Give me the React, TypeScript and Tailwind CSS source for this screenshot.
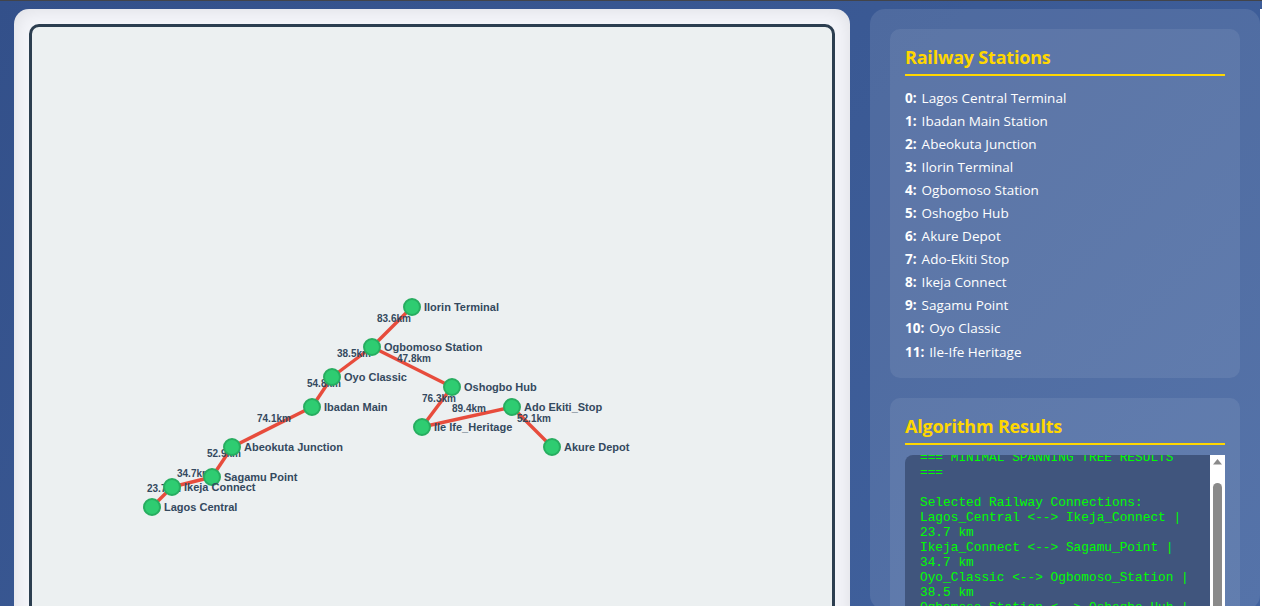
import React from "react";

const OX = 32;
const OY = 27;

const nodes: [string, number, number][] = [
  ["Lagos Central", 152, 507],
  ["Ikeja Connect", 172, 487],
  ["Sagamu Point", 212, 477],
  ["Abeokuta Junction", 232, 447],
  ["Ibadan Main", 312, 407],
  ["Oyo Classic", 332, 377],
  ["Ogbomoso Station", 372, 347],
  ["Ilorin Terminal", 412, 307],
  ["Oshogbo Hub", 452, 387],
  ["Ile Ife_Heritage", 422, 427],
  ["Ado Ekiti_Stop", 512, 407],
  ["Akure Depot", 552, 447],
];

const edges: [number, number, string][] = [
  [0, 1, "23.7km"],
  [1, 2, "34.7km"],
  [5, 6, "38.5km"],
  [6, 8, "47.8km"],
  [10, 11, "52.1km"],
  [2, 3, "52.9km"],
  [4, 5, "54.8km"],
  [3, 4, "74.1km"],
  [8, 9, "76.3km"],
  [6, 7, "83.6km"],
  [9, 10, "89.4km"],
];

const stations = [
  "Lagos Central Terminal",
  "Ibadan Main Station",
  "Abeokuta Junction",
  "Ilorin Terminal",
  "Ogbomoso Station",
  "Oshogbo Hub",
  "Akure Depot",
  "Ado-Ekiti Stop",
  "Ikeja Connect",
  "Sagamu Point",
  "Oyo Classic",
  "Ile-Ife Heritage",
];

const results = `=== MINIMAL SPANNING TREE RESULTS ===

Selected Railway Connections:
Lagos_Central <--> Ikeja_Connect | 23.7 km
Ikeja_Connect <--> Sagamu_Point | 34.7 km
Oyo_Classic <--> Ogbomoso_Station | 38.5 km
Ogbomoso_Station <--> Oshogbo_Hub | 47.8 km`;

function Graph() {
  return (
    <svg width="800" height="600" className="block" style={{ fontFamily: '"Liberation Sans", Arial, sans-serif' }}>
      {edges.map(([a, b, label]) => {
        const [, x1, y1] = nodes[a];
        const [, x2, y2] = nodes[b];
        const mx = (x1 + x2) / 2 - OX;
        const my = (y1 + y2) / 2 - OY;
        return (
          <g key={label}>
            <line x1={x1 - OX} y1={y1 - OY} x2={x2 - OX} y2={y2 - OY} stroke="#e74c3c" strokeWidth="3.4" />
            <text x={mx - 15} y={my - 5} fontSize="10" fontWeight="700" fill="#34495e">
              {label}
            </text>
          </g>
        );
      })}
      {nodes.map(([name, x, y]) => (
        <circle key={name} cx={x - OX} cy={y - OY} r="8" fill="#2ecc71" stroke="#27ae60" strokeWidth="2" />
      ))}
      {nodes.map(([name, x, y]) => (
        <text key={name} x={x - OX + 12} y={y - OY + 4} fontSize="11" fontWeight="700" fill="#34495e">
          {name}
        </text>
      ))}
    </svg>
  );
}

function Heading({ children }: { children: React.ReactNode }) {
  return (
    <h3 className="h-[32px] border-b-2 border-[#ffd700] text-[18px] leading-[26px] font-bold tracking-[-0.2px] text-[#ffd700]">
      {children}
    </h3>
  );
}

export default function App() {
  return (
    <div
      className="flex h-[606px] flex-col overflow-hidden bg-[linear-gradient(135deg,#33508a,#42639f)]"
      style={{ fontFamily: '"Open Sans", "Noto Sans", sans-serif' }}
    >
      <div className="h-[1px] shrink-0 bg-[#42444a]" />
      <div className="flex min-h-0 flex-1 items-start pt-[8px] pl-[14px]">
        <div className="h-[640px] w-[836px] shrink-0 rounded-[15px] bg-[#f4f5fa] p-[15px] shadow-[inset_0_0_20px_rgba(0,0,0,0.1)]">
          <div className="h-[620px] overflow-hidden rounded-[10px] border-[3px] border-[#2c3e50] bg-[#ecf0f1]">
            <Graph />
          </div>
        </div>
        <div className="ml-[20px] h-[601px] w-[390px] shrink-0 overflow-hidden rounded-[15px] bg-white/10 p-[20px]">
          <div className="h-[349px] rounded-[10px] bg-white/[0.08] px-[15px] pt-[15px]">
            <Heading>Railway Stations</Heading>
            <ul className="mt-[11px] text-[13.5px] leading-[23px] text-white">
              {stations.map((s, i) => (
                <li key={s} className="last:pt-[1px]">
                  <span className="mr-[1.5px] font-bold">{i}:</span> {s}
                </li>
              ))}
            </ul>
          </div>
          <div className="mt-[20px] h-[300px] rounded-[10px] bg-white/[0.08] px-[15px] pt-[15px]">
            <Heading>Algorithm Results</Heading>
            <div className="mt-[10px] flex h-[200px] overflow-hidden rounded-tl-[8px]">
              <pre
                className="min-w-0 flex-1 overflow-hidden bg-[#40557d] pl-[15px] pr-[15px] text-[12.8px] leading-[15px] whitespace-pre-wrap text-[#00ff00]"
                style={{ fontFamily: '"Liberation Mono", "Courier New", monospace' }}
              >
                <div className="-mt-[5px]">{results}</div>
              </pre>
              <div className="relative w-[15px] shrink-0 bg-white">
                <svg width="15" height="15" className="block">
                  <path d="M7.5 4 L3 9.5 H12 Z" fill="#8a8a8a" />
                </svg>
                <div className="mx-auto mt-[13px] h-[180px] w-[9px] rounded-t-[5px] bg-[#8a8a8a]" />
              </div>
            </div>
          </div>
        </div>
        <div className="ml-0 h-[600px] w-[2px] shrink-0 bg-white" />
      </div>
    </div>
  );
}
